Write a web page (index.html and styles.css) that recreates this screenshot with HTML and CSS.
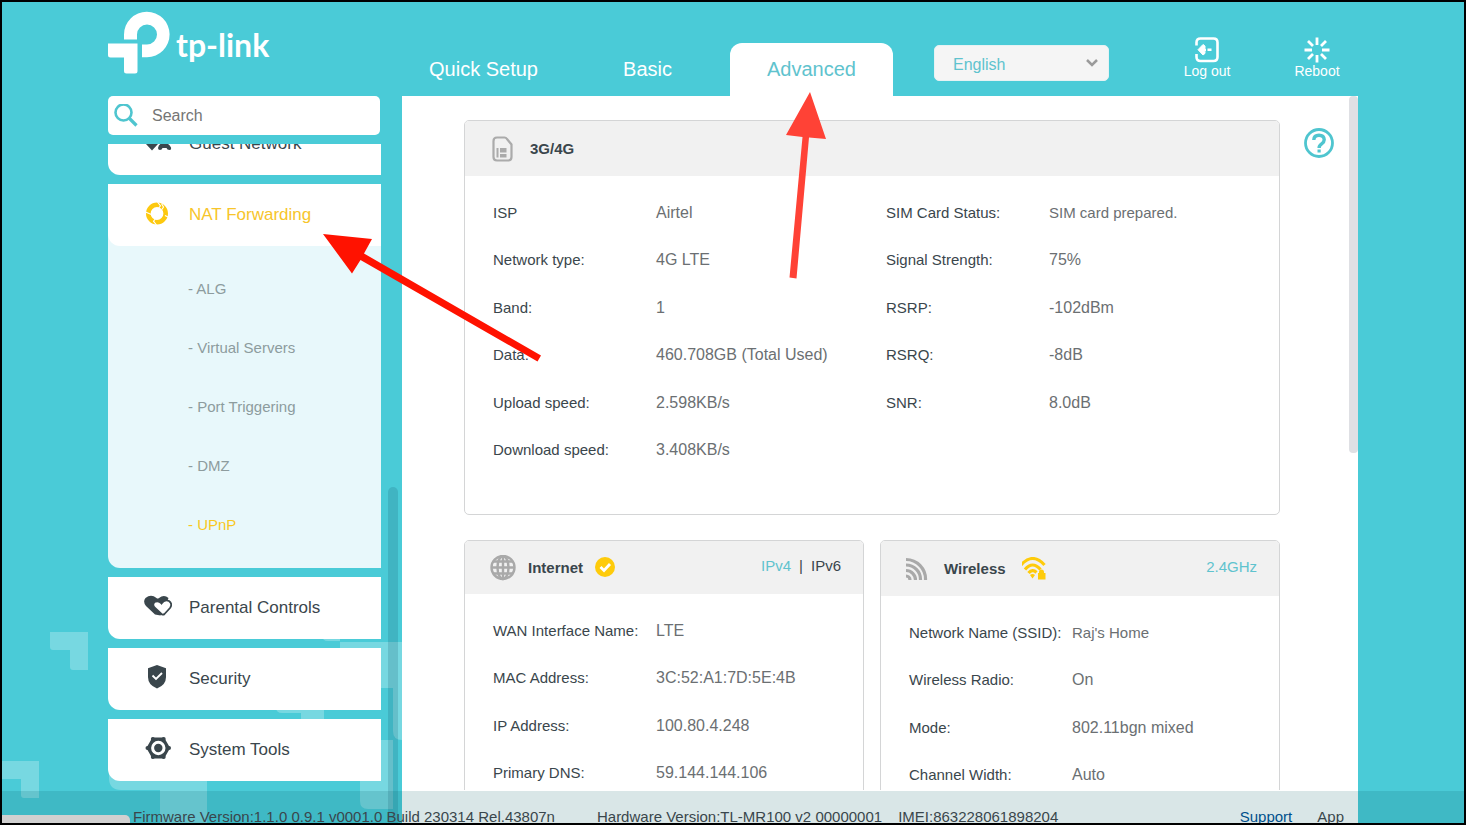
FILE: index.html
```html
<!DOCTYPE html>
<html lang="en">
<head>
<meta charset="utf-8">
<meta name="viewport" content="width=device-width, initial-scale=1">
<title>TL-MR100</title>
<link rel="stylesheet" href="styles.css">
</head>
<body class="page">
<svg class="backdrop" width="404" height="825" viewBox="0 0 404 825" aria-hidden="true">
  <path d="M50 632H88V670H73q-3 0-3-3V650H53q-3 0-3-3z"/>
  <path d="M2 761H39V798H24q-3 0-3-3V779H2z"/>
  <path d="M109 745H207V825H160V790H121q-12 0-12-12z"/>
  <path d="M276 690H324V735H304q-3 0-3-3V713H282q-6 0-6-6z"/>
  <path d="M322 610H340V641H328q-6 0-6-6z"/>
  <path d="M340 642H404V740H402q-9 0-9-9V688H340z"/>
  <path d="M345 740H393V809H368q-8 0-8-8V760H345z"/>
</svg>

<div class="app">
  <header class="header">
    <a class="logo" href="#" aria-label="tp-link">
      <svg width="62" height="63" viewBox="108 11 62 63" aria-hidden="true">
        <path fill="#fff" d="M124 39.500V34.500A22.800 22.800 0 1 1 147 57.300H142V44.500H147A10 10 0 1 0 137 34.500V39.500z"/>
        <path fill="#fff" d="M108 43.500H137.500V71q0 2.500-2.500 2.500H126.500q-2.500 0-2.500-2.500V57.500H110.500q-2.500 0-2.500-2.500z"/>
      </svg>
      <span class="logo-text">tp-link</span>
    </a>
    <nav class="tabs">
      <a class="tab" href="#">Quick Setup</a>
      <a class="tab" href="#">Basic</a>
      <a class="tab tab-active" href="#">Advanced</a>
    </nav>
    <div class="language">
      <select class="language-select" aria-label="Language"><option>English</option></select>
      <svg class="language-arrow" width="14" height="10" viewBox="0 0 14 10" aria-hidden="true"><path d="M2 2l5 5 5-5" fill="none" stroke="#9b9b9b" stroke-width="2.500"/></svg>
    </div>
    <div class="actions">
      <button class="action" type="button">
        <svg width="26" height="26" viewBox="0 0 26 26" fill="none" stroke="#fff" aria-hidden="true">
          <path d="M2.500 8.500V5.500q0-4 4-4H19.500q4 0 4 4V20q0 4-4 4H6.500q-4 0-4-4V17" stroke-width="2.600"/>
          <path d="M4 12.700L9 7.500l2 1.500v2l-1.500 1.700 1.500 1.700v2L9 18z" fill="#fff" stroke-width="1"/>
          <path d="M8 12.700H12M13.500 12.700H17.500" stroke-width="2.600"/>
        </svg>
        Log out
      </button>
      <button class="action" type="button">
        <svg width="26" height="26" viewBox="0 0 26 26" fill="none" stroke="#fff" stroke-width="2.800" aria-hidden="true">
          <path d="M13 .5V8M13 18v7.500M.5 13H8M18 13h7.500M4 4l5 5M17 17l5 5M22 4l-5 5M9 17l-5 5"/>
        </svg>
        Reboot
      </button>
    </div>
  </header>

  <div class="columns">
    <aside class="sidebar">
      <label class="search">
        <svg width="24" height="24" viewBox="0 0 24 24" fill="none" stroke="#4fc5cf" aria-hidden="true"><circle cx="9.500" cy="8.500" r="8" stroke-width="2.600"/><path d="M15 14l7.500 7.500" stroke-width="3.200"/></svg>
        <input class="search-input" type="text" placeholder="Search" aria-label="Search">
      </label>
      <nav class="menu">
        <a class="menu-item" href="#">
          <svg width="28" height="28" viewBox="0 0 28 28" fill="#3a464c" aria-hidden="true"><circle cx="8" cy="8" r="4"/><circle cx="20" cy="8" r="4"/><path d="M2 14h12l-6 6.500zM14 18q1-5 6-5t7 4.500q.5 2.500-1.500 2.500-2.500 0-3-2h-4q-.5 2-2.500 2t-2-2z"/></svg>
          Guest Network
        </a>
        <div class="menu-group">
          <a class="menu-item menu-item-active" href="#">
            <svg width="28" height="28" viewBox="0 0 28 28" fill="#fdc90f" aria-hidden="true">
              <circle cx="13" cy="12.500" r="8.700" fill="none" stroke="#fdc90f" stroke-width="4.600"/>
              <path d="M13.500 1l3 3.800-3 3.700M17.500 2.500l2 3.500-1.500 2.500M12.500 24l-3-3.800 3-3.700M1.500 11l7 3M21 14.500l4 2" fill="none" stroke="#fff" stroke-width="1.100"/>
            </svg>
            NAT Forwarding
          </a>
          <div class="submenu">
            <a class="submenu-item" href="#">- ALG</a>
            <a class="submenu-item" href="#">- Virtual Servers</a>
            <a class="submenu-item" href="#">- Port Triggering</a>
            <a class="submenu-item" href="#">- DMZ</a>
            <a class="submenu-item submenu-item-active" href="#">- UPnP</a>
          </div>
        </div>
        <a class="menu-item" href="#">
          <svg width="28" height="28" viewBox="0 0 28 28" fill="#3a464c" aria-hidden="true">
            <path d="M11 20.500L2 12Q-1.500 7.500 1.500 4 7-.5 12.500 4q1 1 2.500 0 5-4 9.500 0l-4 10-4 7.500z"/>
            <path d="M18 20.500l-7.500-7q-2.500-3 0-5.500 4-2 7 1.500 3-4.500 7.500-2.500 4 3 1 7l-5.500 6q-1 1-2.500.5z" fill="#fff" stroke="#3a464c" stroke-width="1.800"/>
          </svg>
          Parental Controls
        </a>
        <a class="menu-item" href="#">
          <svg width="28" height="28" viewBox="0 0 28 28" aria-hidden="true">
            <path fill="#3a464c" d="M13 0l9 3.300V12q0 8-9 11.500Q4 20 4 12V3.300z"/>
            <path d="M8.500 10.500l3.500 3.500 6-6" fill="none" stroke="#fff" stroke-width="1.900"/>
          </svg>
          Security
        </a>
        <a class="menu-item" href="#">
          <svg width="28" height="28" viewBox="0 0 28 28" fill="none" stroke="#3a464c" aria-hidden="true">
            <path d="M9 2.500h10.500L25 12l-5.500 9.500H9L3.500 12z" fill="#3a464c" stroke-width="2"/>
            <g fill="#3a464c" stroke="none"><circle cx="8.800" cy="3" r="2"/><circle cx="19.700" cy="3" r="2"/><circle cx="3.500" cy="12" r="2"/><circle cx="25" cy="12" r="2"/><circle cx="8.800" cy="21" r="2"/><circle cx="19.700" cy="21" r="2"/></g>
            <circle cx="14.300" cy="12" r="5.700" fill="#3a464c" stroke="#fff" stroke-width="3"/>
          </svg>
          System Tools
        </a>
      </nav>
      <div class="sidebar-thumb"></div>
    </aside>

    <main class="main">
      <div class="main-scroll">
        <div class="cards">
          <section class="card card-wide">
            <div class="card-head card-head-tall">
              <svg width="24" height="26" viewBox="-2 0 24 26" fill="none" stroke="#ababab" aria-hidden="true"><path d="M5 1.500H12.500Q14 1.500 15 3L19.500 8.500V21q0 3.500-3.500 3.500H5Q1.500 24.500 1.500 21V5Q1.500 1.500 5 1.500z" stroke-width="2.200"/><path fill="#ababab" stroke="none" d="M4.500 12H6.500V21.500H4.500zM8 12h6.500v4.500H8zM8 18h6.500v3.500H8z"/></svg>
              <h2 class="card-title">3G/4G</h2>
            </div>
            <div class="card-body card-body-split">
              <dl class="list">
                <div class="row"><dt>ISP</dt><dd>Airtel</dd></div>
                <div class="row"><dt>Network type:</dt><dd>4G LTE</dd></div>
                <div class="row"><dt>Band:</dt><dd>1</dd></div>
                <div class="row"><dt>Data:</dt><dd>460.708GB (Total Used)</dd></div>
                <div class="row"><dt>Upload speed:</dt><dd>2.598KB/s</dd></div>
                <div class="row"><dt>Download speed:</dt><dd>3.408KB/s</dd></div>
              </dl>
              <dl class="list">
                <div class="row"><dt>SIM Card Status:</dt><dd class="name">SIM card prepared.</dd></div>
                <div class="row"><dt>Signal Strength:</dt><dd>75%</dd></div>
                <div class="row"><dt>RSRP:</dt><dd>-102dBm</dd></div>
                <div class="row"><dt>RSRQ:</dt><dd>-8dB</dd></div>
                <div class="row"><dt>SNR:</dt><dd>8.0dB</dd></div>
              </dl>
            </div>
          </section>

          <section class="card">
            <div class="card-head">
              <svg width="26" height="26" viewBox="0 0 26 26" fill="none" stroke="#a9a9a9" stroke-width="2.400" aria-hidden="true"><circle cx="13" cy="12.500" r="11.500"/><ellipse cx="13" cy="12.500" rx="5.500" ry="11.500"/><path d="M13 1v23M1.500 12.500h23M3 6.500h20M3 18.500h20"/></svg>
              <h2 class="card-title">Internet</h2>
              <svg width="20" height="22" viewBox="0 1 20 22" aria-hidden="true"><circle cx="10" cy="11" r="10" fill="#fecb0b"/><path d="M5.500 11l3.500 3.500 6-6.500" fill="none" stroke="#fff" stroke-width="2.800"/></svg>
              <div class="card-links"><a class="link" href="#">IPv4</a><span>|</span><a class="link-dark" href="#">IPv6</a></div>
            </div>
            <div class="card-body">
              <dl class="list">
                <div class="row"><dt>WAN Interface Name:</dt><dd>LTE</dd></div>
                <div class="row"><dt>MAC Address:</dt><dd>3C:52:A1:7D:5E:4B</dd></div>
                <div class="row"><dt>IP Address:</dt><dd>100.80.4.248</dd></div>
                <div class="row"><dt>Primary DNS:</dt><dd>59.144.144.106</dd></div>
              </dl>
            </div>
          </section>

          <section class="card">
            <div class="card-head card-head-tall">
              <svg width="22" height="24" viewBox="0 0 22 24" fill="none" stroke="#a9a9a9" stroke-width="3.200" aria-hidden="true"><path d="M0 2.500A19.500 19.500 0 0 1 19.500 23M0 8A14.500 14.500 0 0 1 14.500 23M0 13.500A9.500 9.500 0 0 1 9.500 23M0 19A4 4 0 0 1 4 23"/></svg>
              <h2 class="card-title">Wireless</h2>
              <svg width="24" height="24" viewBox="2 1 24 24" aria-hidden="true"><g fill="none" stroke="#fecb0b" stroke-width="3.200"><path d="M1 9Q12.500 -4 24.500 9M5 13.500Q12.500 4.500 20.500 13.500M8.500 17Q12.500 12.500 16.500 16.500"/></g><path d="M10 19q2.500-2 5 0l-2.500 3.500zM19 17v-1q0-2.500 2.500-2.500T24 16v1h1.500V23.500H18V17z" fill="#fecb0b"/></svg>
              <div class="card-links"><a class="link" href="#">2.4GHz</a></div>
            </div>
            <div class="card-body">
              <dl class="list">
                <div class="row"><dt>Network Name (SSID):</dt><dd class="name">Raj's Home</dd></div>
                <div class="row"><dt>Wireless Radio:</dt><dd>On</dd></div>
                <div class="row"><dt>Mode:</dt><dd>802.11bgn mixed</dd></div>
                <div class="row"><dt>Channel Width:</dt><dd>Auto</dd></div>
              </dl>
            </div>
          </section>
        </div>
        <button class="help" type="button" aria-label="Help">
          <svg width="30" height="30" viewBox="0 0 30 30" fill="none" stroke="#4fc5cf" aria-hidden="true"><circle cx="15" cy="15" r="13.500" stroke-width="2.800"/><path d="M9.800 12Q10 7.300 15 7.300t5.200 4.400q0 2.300-2.600 4.200-2.500 1.700-2.500 4" stroke-width="3.400"/><path d="M13.500 21.500h3.200v3h-3.200z" fill="#4fc5cf" stroke="none"/></svg>
        </button>
      </div>
      <div class="main-thumb"></div>
    </main>
  </div>
</div>

<footer class="footer">
  <div class="footer-inner">
    <span class="firmware">Firmware Version:1.1.0 0.9.1 v0001.0 Build 230314 Rel.43807n</span>
    <span class="hardware">Hardware Version:TL-MR100 v2 00000001</span>
    <span>IMEI:863228061898204</span>
    <a class="support" href="#">Support</a>
    <a class="phone-app" href="#">App</a>
  </div>
</footer>
<div class="status"></div>

<svg class="arrows" width="1466" height="825" viewBox="0 0 1466 825" aria-hidden="true">
  <path fill="#ff4236" d="M810 92L826 139 809 137.500 796.500 278.500 789.500 277.500 802.500 137 786 135z"/>
  <path fill="#ff1200" d="M323 234L372 239 364 253.500 541 355.500 537.500 361.500 360.500 260 352 273.500z"/>
</svg>
</body>
</html>
```
FILE: styles.css
```css
* {
  box-sizing: border-box;
}

.page {
  position: relative;
  height: 100vh;
  margin: 0;
  border: 2px solid #000;
  overflow: hidden;
  background: #4acbd7;
  color: #3a464c;
  font: 15px/20px "Liberation Sans", Arial, sans-serif;
}

a {
  color: inherit;
  text-decoration: none;
}

button {
  padding: 0;
  border: 0;
  background: none;
  color: inherit;
  font: inherit;
}

svg {
  display: block;
  flex: none;
}

.backdrop {
  position: absolute;
  left: -2px;
  bottom: -2px;
  fill: rgba(255, 255, 255, 0.25);
}

.app {
  position: relative;
  display: flex;
  flex-direction: column;
  max-width: 1250px;
  height: 100%;
  margin: 0 auto;
}

/* Header */

.header {
  display: flex;
  flex: none;
  align-items: flex-end;
  height: 94px;
  color: #fff;
}

.logo {
  display: flex;
  gap: 6px;
  align-self: flex-start;
  width: 294px;
  padding-top: 9px;
}

.logo-text {
  padding-top: 14px;
  font: 700 32px/40px Lato, sans-serif;
}

.tabs {
  display: flex;
  gap: 1px;
}

.tab {
  width: 163px;
  border-radius: 12px 12px 0 0;
  font-size: 20px;
  line-height: 53px;
  text-align: center;
}

.tab-active {
  background: #fff;
  color: #5fc3ce;
}

.language {
  position: relative;
  width: 175px;
  margin: 0 0 15px 41px;
}

.language-select {
  width: 100%;
  height: 36px;
  padding: 3px 18px 0;
  border: 1px solid #e6f2f3;
  border-radius: 5px;
  background: #f5f5f5;
  color: #5fc3ce;
  font: inherit;
  font-size: 16px;
  appearance: none;
}

.language-arrow {
  position: absolute;
  top: 13px;
  right: 10px;
  pointer-events: none;
}

.actions {
  display: flex;
  gap: 50px;
  margin: 0 11px 17px auto;
}

.action {
  display: flex;
  flex-direction: column;
  align-items: center;
  width: 60px;
  font-size: 14px;
  line-height: 16px;
}

/* Columns */

.columns {
  display: flex;
  flex: 1;
  gap: 21px;
  min-height: 0;
}

.sidebar {
  position: relative;
  flex: none;
  width: 273px;
}

.search {
  display: flex;
  align-items: center;
  width: 272px;
  height: 39px;
  padding: 0 6px;
  border-radius: 5px;
  background: #fff;
}

.search-input {
  flex: 1;
  min-width: 0;
  padding: 0 14px;
  border: 0;
  outline: 0;
  background: none;
  font: inherit;
  font-size: 16px;
}

.search-input::placeholder {
  color: #757575;
}

.menu {
  display: flex;
  flex-direction: column;
  gap: 9px;
  margin-top: 9px;
  overflow: hidden;
}

.menu-item {
  display: flex;
  flex: none;
  align-items: center;
  gap: 17px;
  height: 62px;
  padding-left: 36px;
  border-bottom-left-radius: 12px;
  background: #fff;
  font-size: 17px;
}

.menu-item:first-child {
  margin-top: -31px;
}

.menu-group .menu-item {
  margin-top: 0;
}

.menu-item-active {
  color: #f7c52b;
}

.menu-group {
  border-bottom-left-radius: 12px;
  background: #e8f8fb;
}

.submenu {
  padding: 13px 0 14px 80px;
}

.submenu-item {
  display: block;
  color: #8d9c9e;
  line-height: 59px;
}

.submenu-item-active {
  color: #f9c81e;
}

.sidebar-thumb {
  position: absolute;
  top: 391px;
  bottom: 0;
  left: 280px;
  width: 10px;
  border-radius: 5px 5px 0 0;
  background: rgba(10, 60, 90, 0.16);
}

/* Main panel */

.main {
  position: relative;
  flex: 1;
  min-width: 0;
  padding-bottom: 33px;
  background: #fff;
}

.main-scroll {
  display: flex;
  gap: 24px;
  height: 100%;
  padding: 24px 24px 0 62px;
  overflow: hidden;
}

.main-thumb {
  position: absolute;
  top: 0;
  right: 0;
  width: 9px;
  height: 357px;
  border-radius: 4px;
  background: #dfe0e4;
}

.cards {
  display: grid;
  flex: 1;
  grid-template-columns: 1fr 1fr;
  grid-auto-rows: max-content;
  gap: 25px 16px;
}

.card {
  border: 1px solid #d4d5d6;
  border-radius: 5px;
  overflow: hidden;
}

.card-wide {
  grid-column: 1 / -1;
}

.card-head {
  display: flex;
  align-items: center;
  gap: 12px;
  height: 53px;
  padding: 0 22px 0 25px;
  background: #f1f1f1;
}

.card-head-tall {
  gap: 16px;
  height: 55px;
}

.card-title {
  margin: 0;
  font-size: 15px;
  line-height: 20px;
}

.card-links {
  display: flex;
  gap: 8px;
  margin-left: auto;
  padding-bottom: 4px;
}

.link {
  color: #5fc3ce;
}

.card-body {
  padding: 13px 0 40px 28px;
}

.card-body-split {
  display: grid;
  grid-template-columns: 1fr 1fr;
}

.list {
  display: grid;
  grid-template-rows: repeat(6, 1fr);
  height: 285px;
  margin: 0;
}

.row {
  display: grid;
  grid-template-columns: 163px 1fr;
  align-items: center;
}

.row dd {
  margin: 0;
  color: #6b6f72;
  font-size: 16px;
}

.row .name {
  font-size: 15px;
}

.help {
  align-self: flex-start;
  margin-top: 8px;
}

/* Footer */

.footer {
  position: absolute;
  right: 0;
  bottom: 0;
  left: 0;
  height: 32px;
  overflow: hidden;
  background: rgba(0, 85, 95, 0.15);
}

.footer-inner {
  display: flex;
  max-width: 1250px;
  margin: 0 auto;
  padding: 16px 14px 0 25px;
}

.firmware {
  margin-right: 42px;
}

.hardware {
  margin-right: 16px;
}

.support {
  margin-left: auto;
  color: #00508c;
}

.phone-app {
  margin-left: 25px;
}

.status {
  position: absolute;
  bottom: 0;
  left: 0;
  width: 128px;
  height: 8px;
  border-radius: 0 5px 0 0;
  background: #d0d0d0;
}

.arrows {
  position: absolute;
  top: -2px;
  left: -2px;
  pointer-events: none;
}
```
